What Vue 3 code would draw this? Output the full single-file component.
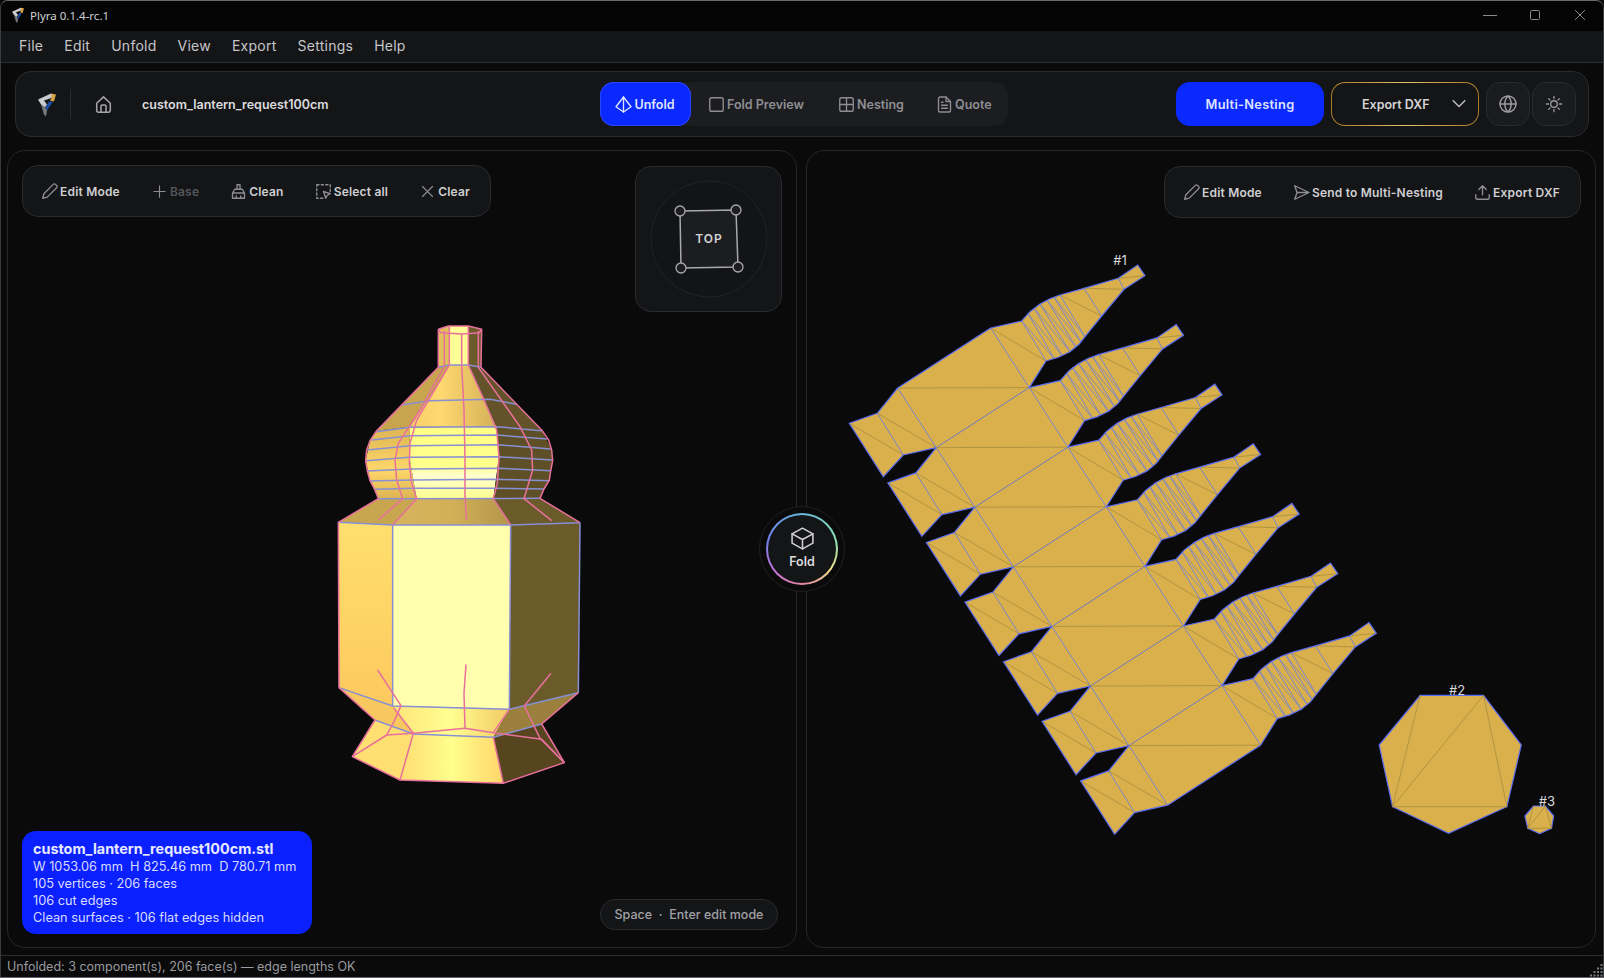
<template>
  <div class="window">
    <header class="titlebar">
      <svg class="logo-small" viewBox="0 0 20 24"><polygon points="1,7 14,1 17,3 13,6 7,8 10,12 8,15 4,12" fill="#c9cbce"/><polygon points="14,1 19,2 17,9 13,8 15,4" fill="#d9a441"/><polygon points="12,9 16,9 10,18 8,16" fill="#1d4fa8"/><polygon points="4,12 8,15 10,18 9,24 7,22" fill="#77797c"/></svg>
      <span class="app-title">Plyra 0.1.4-rc.1</span>
      <div class="win-controls">
        <svg viewBox="0 0 14 14"><line x1="0" y1="7.5" x2="14" y2="7.5"/></svg>
        <svg viewBox="0 0 14 14"><rect x="2.5" y="2.5" width="9" height="9" rx="1"/></svg>
        <svg viewBox="0 0 14 14"><path d="M2 2l10 10M12 2L2 12"/></svg>
      </div>
    </header>

    <nav class="menubar">
      <span v-for="item in menu" :key="item">{{ item }}</span>
    </nav>

    <section class="topbar">
      <div class="top-left">
        <svg class="logo" viewBox="0 0 20 24"><polygon points="1,7 14,1 17,3 13,6 7,8 10,12 8,15 4,12" fill="#c9cbce"/><polygon points="14,1 19,2 17,9 13,8 15,4" fill="#d9a441"/><polygon points="12,9 16,9 10,18 8,16" fill="#1d4fa8"/><polygon points="4,12 8,15 10,18 9,24 7,22" fill="#77797c"/></svg>
        <div class="vline"></div>
        <svg class="icon home" viewBox="2 2 20 20"><path d="M4 10.5 12 3l8 7.5V19a2 2 0 0 1-2 2H6a2 2 0 0 1-2-2z"/><path d="M9 21v-7a1.5 1.5 0 0 1 1.5-1.5h3A1.5 1.5 0 0 1 15 14v7"/></svg>
        <span class="filename">custom_lantern_request100cm</span>
      </div>

      <div class="tabs">
        <button class="tab active">
          <svg class="icon" viewBox="2 2 20 20"><path d="M12 2 22 15 12 22 2 15z"/><path d="M12 2v20"/></svg>
          Unfold
        </button>
        <button class="tab">
          <svg class="icon" viewBox="2 2 20 20"><rect x="3" y="3" width="18" height="18" rx="2.5"/></svg>
          Fold Preview
        </button>
        <button class="tab">
          <svg class="icon" viewBox="2 2 20 20"><rect x="3" y="3" width="18" height="18" rx="2.5"/><path d="M3 12h18M12 3v18"/></svg>
          Nesting
        </button>
        <button class="tab">
          <svg class="icon" viewBox="2 2 20 20"><path d="M14 2H6a2 2 0 0 0-2 2v16a2 2 0 0 0 2 2h12a2 2 0 0 0 2-2V8z"/><path d="M14 2v6h6M8 13h8M8 17h8M8 9h2"/></svg>
          Quote
        </button>
      </div>

      <div class="top-actions">
        <button class="multi">Multi-Nesting</button>
        <button class="export">
          <span>Export DXF</span>
          <svg class="icon chevron" viewBox="0 0 24 24"><path d="m5 8 7 7 7-7"/></svg>
        </button>
        <button class="round">
          <svg class="icon" viewBox="2 2 20 20"><circle cx="12" cy="12" r="10"/><path d="M2 12h20M12 2c3 3 4 6.500 4 10s-1 7-4 10c-3-3-4-6.500-4-10s1-7 4-10z"/></svg>
        </button>
        <button class="round">
          <svg class="icon" viewBox="1 1 22 22"><circle cx="12" cy="12" r="4.500"/><path d="M12 1.500v3M12 19.500v3M1.500 12h3M19.500 12h3M4.600 4.600l2.100 2.100M17.300 17.300l2.100 2.100M4.600 19.400l2.100-2.100M17.300 6.700l2.100-2.100"/></svg>
        </button>
      </div>
    </section>

    <main class="panels">
      <section class="panel">
        <svg class="canvas" viewBox="320 310 270 500">
          <defs>
            <linearGradient id="foot"><stop offset="0" stop-color="#ffdc72"/><stop offset=".5" stop-color="#ffff8c"/><stop offset="1" stop-color="#ffd56a"/></linearGradient>
            <linearGradient id="skirt"><stop offset="0" stop-color="#ffe47a"/><stop offset=".5" stop-color="#ffff90"/><stop offset="1" stop-color="#f2c864"/></linearGradient>
            <linearGradient id="dome"><stop offset="0" stop-color="#f8cf68"/><stop offset=".35" stop-color="#ffd870"/><stop offset="1" stop-color="#d4b058"/></linearGradient>
            <linearGradient id="shoulder"><stop offset="0" stop-color="#d6b35c"/><stop offset=".5" stop-color="#d2b058"/><stop offset="1" stop-color="#b4964a"/></linearGradient>
            <linearGradient id="bulb" x1="0" y1="0" x2="0" y2="1"><stop offset="0" stop-color="#ffff84"/><stop offset=".55" stop-color="#ffff8c"/><stop offset=".68" stop-color="#ffffd0"/><stop offset="1" stop-color="#ffff8c"/></linearGradient>
            <linearGradient id="bulbSide" x1="0" y1="0" x2="0" y2="1"><stop offset="0" stop-color="#dcb452"/><stop offset=".6" stop-color="#ffd66a"/><stop offset="1" stop-color="#dcb452"/></linearGradient>
            <linearGradient id="side" x1="0" y1="0" x2="0" y2="1"><stop offset="0" stop-color="#ffdf6e"/><stop offset="1" stop-color="#fdc95f"/></linearGradient>
          </defs>
          <g transform="translate(320 310) scale(.33333)">
            <polygon v-for="(f, i) in faces" :key="'f' + i" :points="f.p" :fill="f.c" />
            <polyline v-for="(l, i) in blueLines" :key="'b' + i" :points="l" class="l-blue" />
            <polyline v-for="(l, i) in pinkLines" :key="'p' + i" :points="l" class="l-pink" />
          </g>
        </svg>

        <div class="toolbar left-tools">
          <button><svg class="icon" viewBox="2 2 20 20"><path d="M3 21l1.500-6L17 2.500a2.100 2.100 0 0 1 3 0l1.500 1.500a2.100 2.100 0 0 1 0 3L9 19.500z"/></svg>Edit Mode</button>
          <button class="off"><svg class="icon" viewBox="0 0 24 24"><path d="M12 3v18M3 12h18"/></svg>Base</button>
          <button><svg class="icon" viewBox="2 2 20 20"><path d="M10 3h4v6h-4zM7 9h10l3 5H4zM4 14v7h16v-7M9 21v-3M15 21v-3"/></svg>Clean</button>
          <button><svg class="icon" viewBox="2 2 20 20"><path stroke-dasharray="3 3" d="M3 3h18v9M11 21H3V3"/><path d="m12 12 9 3-4 2-2 4z"/></svg>Select all</button>
          <button><svg class="icon" viewBox="0 0 24 24"><path d="M4 4l16 16M20 4 4 20"/></svg>Clear</button>
        </div>

        <div class="cube-box">
          <svg viewBox="0 0 147 146">
            <circle cx="74" cy="73" r="58" class="cube-ring"/>
            <polygon points="45,45 101,44 103,101 46,102" class="cube-face"/>
            <circle v-for="c in cubeCorners" :key="c[0]" :cx="c[0]" :cy="c[1]" r="5" class="cube-dot"/>
            <text x="74" y="77" text-anchor="middle" class="cube-text">TOP</text>
          </svg>
        </div>

        <div class="info">
          <strong>custom_lantern_request100cm.stl</strong>
          <span>W 1053.06 mm&nbsp; H 825.46 mm&nbsp; D 780.71 mm</span>
          <span>105 vertices · 206 faces</span>
          <span>106 cut edges</span>
          <span>Clean surfaces · 106 flat edges hidden</span>
        </div>

        <div class="hint">Space &nbsp;·&nbsp; Enter edit mode</div>
      </section>

      <section class="panel">
        <svg class="canvas" viewBox="807 151 788 796">
          <g v-for="(s, i) in strips" :key="'s' + i" :transform="`translate(${s[0]} ${s[1]})`">
            <polygon :points="stripOutline.join(' ')" class="net-fill" />
          </g>
          <g v-for="(s, i) in strips" :key="'n' + i" :transform="`translate(${s[0]} ${s[1]})`">
            <line v-for="(d, j) in stripDiagonals" :key="'d' + j" :x1="d[0]" :y1="d[1]" :x2="d[2]" :y2="d[3]" class="net-fold" />
            <line v-for="(d, j) in stripStripes" :key="'t' + j" :x1="d[0]" :y1="d[1]" :x2="d[2]" :y2="d[3]" class="net-stripe" />
            <line v-for="(d, j) in stripCuts" :key="'c' + j" :x1="d[0]" :y1="d[1]" :x2="d[2]" :y2="d[3]" class="net-cut" />
            <polyline :points="edgeFar" class="net-edge" />
            <polyline :points="edgeNear" class="net-edge" />
            <line v-if="i === 0" x1="897.7" y1="388" x2="990.7" y2="328" class="net-edge" />
            <line x1="936.25" y1="447.6" x2="1029.25" y2="387.6" :class="i === 6 ? 'net-edge' : 'net-cut'" />
          </g>
          <polygon :points="hepta" class="net-fill net-edge-solid" />
          <path d="M1420.200 695.300 1392.500 806.700M1483.500 695.300 1392.500 806.700M1483.500 695.300 1506.900 806.700M1392.500 806.700H1506.900" class="net-fold" />
          <polygon :points="tiny" class="net-fill net-edge-solid" />
          <path d="M1533.500 806 1527.800 828.300M1545.400 806 1527.800 828.300M1545.400 806 1551.500 828.300M1527.800 828.300H1551.500" class="net-fold" />
          <text x="1120" y="265" class="net-label" text-anchor="middle">#1</text>
          <text x="1457" y="695" class="net-label" text-anchor="middle">#2</text>
          <text x="1547" y="806" class="net-label" text-anchor="middle">#3</text>
        </svg>

        <div class="toolbar right-tools">
          <button><svg class="icon" viewBox="2 2 20 20"><path d="M3 21l1.500-6L17 2.500a2.100 2.100 0 0 1 3 0l1.500 1.500a2.100 2.100 0 0 1 0 3L9 19.500z"/></svg>Edit Mode</button>
          <button><svg class="icon" viewBox="2 2 20 20"><path d="M3 3l19 9-19 9 3-9zM6 12h16"/></svg>Send to Multi-Nesting</button>
          <button><svg class="icon" viewBox="2 2 20 20"><path d="M12 15V3M7 8l5-5 5 5M3 15v4a2 2 0 0 0 2 2h14a2 2 0 0 0 2-2v-4"/></svg>Export DXF</button>
        </div>
      </section>

      <div class="fold-wrap">
        <div class="fold-ring">
          <button class="fold">
            <svg class="icon" viewBox="0 0 24 24"><path d="M12 2 22 7.500v9L12 22 2 16.500v-9z"/><path d="M2 7.500 12 13l10-5.500M12 13v9"/></svg>
            Fold
          </button>
        </div>
      </div>
    </main>

    <footer class="status">
      Unfolded: 3 component(s), 206 face(s) — edge lengths OK
      <svg class="grip" viewBox="0 0 14 14">
        <rect v-for="(d, i) in gripDots" :key="i" :x="d[0]" :y="d[1]" width="2" height="2" />
      </svg>
    </footer>
  </div>
</template>

<script setup>
const menu = ["File", "Edit", "Unfold", "View", "Export", "Settings", "Help"];

const cubeCorners = [[45, 45], [101, 44], [103, 101], [46, 102]];

const gripDots = [];
for (let row = 0; row < 4; row++) {
  for (let col = 3 - row; col < 4; col++) gripDots.push([col * 3.5 + 1, row * 3.5 + 1]);
}

// lantern, in a 3x grid with origin at 320,310
const faces = [
  { p: "355,58 385,48 445,48 485,58 483,172 355,172", c: "#ffff96" },
  { p: "445,48 485,58 483,172 445,165", c: "#6b5a2a" },
  { p: "355,58 388,50 388,165 355,172", c: "#e2c05c" },
  { p: "355,172 388,165 270,350 170,362", c: "#c8a44e" },
  { p: "388,165 445,165 530,350 270,350", c: "url(#dome)" },
  { p: "445,165 483,172 665,360 530,350", c: "#64532a" },
  { p: "170,362 270,350 268,440 290,566 175,566 150,512 137,452 150,392", c: "url(#bulbSide)" },
  { p: "270,350 530,350 537,440 520,566 290,566 268,440", c: "url(#bulb)" },
  { p: "530,350 665,360 695,420 698,452 688,510 660,565 520,566 537,440", c: "#5f4f26" },
  { p: "175,566 290,566 218,645 55,637", c: "#c8a650" },
  { p: "290,566 520,566 572,645 218,645", c: "url(#shoulder)" },
  { p: "520,566 660,565 780,638 572,645", c: "#6b5a2a" },
  { p: "55,637 218,645 218,1188 57,1133", c: "url(#side)" },
  { p: "218,645 572,645 568,1198 218,1188", c: "#ffffae" },
  { p: "572,645 780,638 775,1148 568,1198", c: "#6b5a2a" },
  { p: "97,1340 165,1230 280,1272 240,1410", c: "#ffdf72" },
  { p: "280,1272 520,1282 550,1420 240,1410", c: "url(#foot)" },
  { p: "520,1282 665,1242 733,1358 550,1420", c: "#574520" },
  { p: "57,1133 218,1188 280,1272 165,1230", c: "#f8c860" },
  { p: "218,1188 568,1198 520,1282 280,1272", c: "url(#skirt)" },
  { p: "568,1198 775,1148 665,1242 520,1282", c: "#9a803c" },
];

const blueLines = [
  "355,172 388,165 445,165 483,172",
  "245,285 330,272 510,268 590,283",
  "170,365 270,352 530,350 665,362",
  "155,390 270,377 530,375 682,387",
  "142,420 270,407 532,404 692,417",
  "138,452 268,442 535,440 697,450",
  "142,483 275,477 535,475 692,482",
  "150,513 280,510 530,508 688,512",
  "165,538 285,535 525,535 672,537",
  "175,566 660,565",
  "55,637 218,645 572,645 780,638",
  "218,645 218,1188",
  "572,645 568,1198",
  "57,1133 218,1188 568,1198 775,1148",
  "165,1230 280,1272 520,1282 665,1242",
  "780,638 775,1148",
];

const pinkLines = [
  "355,172 170,362 150,392 140,420 137,452 142,483 150,512 165,540 175,566 55,637 57,1133 165,1230 97,1340 240,1410 550,1420 733,1358 665,1242 775,1148",
  "483,172 665,360 685,388 695,420 698,452 692,483 688,510 672,537 660,565 780,638",
  "355,58 385,48 445,48 485,58 483,172",
  "355,58 362,68 425,72 478,68 485,58",
  "355,58 355,172",
  "373,62 373,168 300,300 235,400 225,450 230,510 248,566 175,630",
  "388,50 388,165 290,330 270,400 268,460 275,520 290,566 218,645",
  "425,72 425,165 432,300 435,450 435,560 440,630",
  "445,48 445,165 490,265 530,360 537,440 532,520 520,566 572,645",
  "475,62 475,172 600,350 635,420 638,480 612,566 695,632",
  "173,1080 243,1187 222,1235 200,1275 97,1340",
  "200,1275 280,1270 240,1410",
  "222,1195 280,1270",
  "438,1063 432,1150 435,1255",
  "280,1270 435,1255 520,1268 665,1288 733,1358",
  "520,1268 568,1198",
  "520,1282 550,1420",
  "693,1090 613,1188 660,1285 733,1358",
];

// one strip of the net, strips repeat along a fixed offset
const stripOutline = [
  "849.3,423.3", "877.3,413.3", "897.7,388", "990.7,328", "1021.7,321",
  "1030,311.7", "1040,304", "1050,298.7", "1060,295", "1084,288.3", "1118.3,278.3",
  "1137.7,265", "1145,275.7", "1124,289.3", "1101.7,316", "1085,336.7",
  "1079.3,344", "1070,351.7", "1058.3,357.3", "1046,361", "1029.25,387.6",
  "936.25,447.6", "903.3,455", "883.3,476.7",
];
// outer edges only, the long shared edges between strips are drawn on their own
const edgeFar = stripOutline.slice(3, 21).join(" ");
const edgeNear = [...stripOutline.slice(21), ...stripOutline.slice(0, 3)].join(" ");

const strips = Array.from({ length: 7 }, (_, i) => [i * 38.55, i * 59.6]);

const top = [[1021.7, 321], [1028, 313.5], [1034, 308], [1040, 304], [1047, 300], [1054, 297], [1060, 295]];
const bottom = [[1046, 361], [1054, 358.5], [1062, 355.5], [1070, 351.7], [1076, 347], [1081, 342], [1085, 336.7]];

const stripCuts = [
  [877.3, 413.3, 903.3, 455],
  [897.7, 388, 936.25, 447.6],
  [990.7, 328, 1029.25, 387.6],
  [1084, 288.3, 1101.7, 316],
  [1118.3, 278.3, 1124, 289.3],
  ...top.map((t, i) => [t[0], t[1], bottom[i][0], bottom[i][1]]),
];

const stripStripes = top.slice(0, -1).map((t, i) => [t[0], t[1], bottom[i + 1][0], bottom[i + 1][1]]);

const stripDiagonals = [
  [849.3, 423.3, 903.3, 455],
  [877.3, 413.3, 936.25, 447.6],
  [897.7, 388, 1029.25, 387.6],
  [990.7, 328, 1046, 361],
  [1060, 295, 1101.7, 316],
  [1084, 288.3, 1124, 289.3],
  [1118.3, 278.3, 1145, 275.7],
];

const hepta = "1420.2,695.3 1483.5,695.3 1521.3,745 1506.9,806.7 1448.6,833.3 1392.5,806.7 1379.2,745";
const tiny = "1533.5,806 1545.4,806 1553.7,816 1551.5,828.3 1539.6,833.7 1527.8,828.3 1524.9,816";
</script>

<style>
html, body {
  margin: 0;
  background: #0a0a0b;
}
</style>

<style scoped>
.window {
  width: 1604px;
  height: 978px;
  display: flex;
  flex-direction: column;
  box-sizing: border-box;
  border: 1px solid #3a3b3d;
  border-top-color: #6a6a6c;
  border-bottom-color: #6a6a6c;
  border-radius: 8px 8px 0 0;
  background: #0a0a0b;
  font-family: Inter, "Noto Sans", sans-serif;
  color: #d8d8da;
  overflow: hidden;
}
button {
  font-family: inherit;
  font-size: inherit;
  font-weight: inherit;
  letter-spacing: inherit;
  border: none;
  background: none;
  color: inherit;
  padding: 0;
}
.icon {
  width: 16px;
  height: 16px;
  fill: none;
  stroke: currentColor;
  stroke-width: 1.8;
  stroke-linecap: round;
  stroke-linejoin: round;
  flex: none;
  overflow: visible;
}

.titlebar {
  height: 30px;
  flex: none;
  display: flex;
  align-items: center;
  background: #050505;
  padding-left: 10px;
  padding-bottom: 2px;
  box-sizing: border-box;
}
.logo-small {
  width: 14px;
  height: 16px;
}
.app-title {
  margin-left: 5px;
  font-family: "Noto Sans", sans-serif;
  font-size: 11.5px;
  color: #d0d0d2;
}
.win-controls {
  margin-left: auto;
  display: flex;
  gap: 31px;
  padding-right: 16px;
}
.win-controls svg {
  width: 14px;
  height: 14px;
  fill: none;
  stroke: #8a8a8c;
  stroke-width: 1;
}

.menubar {
  height: 31px;
  flex: none;
  box-sizing: content-box;
  display: flex;
  align-items: center;
  gap: 21px;
  padding-left: 18px;
  background: #141517;
  border-bottom: 1px solid #2e2f32;
  font-size: 14px;
  letter-spacing: 0.25px;
  color: #c6c6c9;
}
.menubar span {
  margin-top: -2px;
}

.topbar {
  height: 66px;
  flex: none;
  box-sizing: border-box;
  margin: 8px 14px 0;
  display: grid;
  grid-template-columns: 584px 408px 1fr;
  align-items: center;
  background: #141517;
  border: 1px solid #2a2b2e;
  border-radius: 16px;
}
.top-left {
  display: flex;
  align-items: center;
}
.logo {
  width: 20px;
  height: 25px;
  margin-left: 21px;
}
.vline {
  width: 1px;
  height: 30px;
  background: #2a2b2e;
  margin-left: 13px;
}
.home {
  width: 17px;
  height: 17px;
  margin-left: 24px;
  color: #a6a6aa;
}
.filename {
  margin-left: 30px;
  font-size: 12.5px;
  font-weight: 600;
  color: #dcdcde;
}
.tabs {
  height: 44px;
  display: flex;
  background: #1c1d20;
  border-radius: 14px;
}
.tab {
  display: flex;
  align-items: center;
  gap: 3px;
  font-size: 12.5px;
  font-weight: 600;
  color: #8e8e93;
}
.tab .icon {
  width: 15px;
  height: 15px;
}
.tab:nth-child(1) { width: 91px; justify-content: center; }
.tab:nth-child(2) { margin-left: 18px; width: 112px; }
.tab:nth-child(3) { margin-left: 18px; width: 81px; }
.tab:nth-child(4) { margin-left: 17px; }
.tab.active {
  background: #0a29ff;
  color: #dfe4ff;
  border-radius: 14px;
  box-shadow: inset 0 0 0 1px #2a45ff;
}
.top-actions {
  justify-self: end;
  margin-right: 12px;
  display: flex;
  gap: 7px;
}
.multi {
  width: 148px;
  height: 44px;
  border-radius: 14px;
  background: #0a29ff;
  color: #dfe4ff;
  font-size: 12.8px;
  font-weight: 600;
  letter-spacing: 0.3px;
}
.export {
  width: 148px;
  height: 44px;
  box-sizing: border-box;
  border: 1.5px solid transparent;
  border-radius: 14px;
  background: linear-gradient(#141517, #141517) padding-box, linear-gradient(90deg, #a87a28, #e6c266 50%, #a87a28) border-box;
  display: flex;
  align-items: center;
  font-size: 12.5px;
  font-weight: 600;
  color: #d4d4d6;
  padding-left: 30px;
}
.chevron {
  width: 20px;
  height: 20px;
  margin-left: 19px;
  color: #bcbcc0;
}
.round {
  width: 44px;
  height: 44px;
  box-sizing: border-box;
  border: 1px solid #2a2b2e;
  border-radius: 14px;
  background: #1a1b1e;
  display: flex;
  align-items: center;
  justify-content: center;
  color: #9a9a9e;
}
.round + .round {
  margin-left: -5px;
}

.panels {
  flex: 1;
  display: grid;
  grid-template-columns: 790px 790px;
  gap: 9px;
  padding: 13px 8px 7px 6px;
  min-height: 0;
  position: relative;
}
.panel {
  position: relative;
  border: 1px solid #26272a;
  border-radius: 18px;
  background: #0a0a0b;
  overflow: hidden;
}
.canvas {
  position: absolute;
  left: 0;
  top: 0;
  width: 100%;
  height: 100%;
}
.panel:first-child .canvas {
  left: 312px;
  top: 159px;
  width: 270px;
  height: 500px;
}
.l-blue, .l-pink {
  fill: none;
  vector-effect: non-scaling-stroke;
  stroke-linejoin: round;
}
.l-blue {
  stroke: #8790d4;
  stroke-width: 1.5;
}
.l-pink {
  stroke: #e8709c;
  stroke-width: 1.5;
}

.toolbar {
  position: absolute;
  top: 14px;
  height: 52px;
  box-sizing: border-box;
  display: flex;
  align-items: center;
  background: #141517;
  border: 1px solid #2a2b2e;
  border-radius: 16px;
  font-size: 12px;
  font-weight: 600;
  letter-spacing: 0.2px;
  color: #cfcfd2;
}
.toolbar button {
  display: flex;
  align-items: center;
  gap: 3px;
}
.toolbar .icon {
  width: 15px;
  height: 15px;
  color: #8e8e92;
}
.toolbar button.off {
  color: #55565a;
}
.left-tools {
  left: 14px;
  width: 469px;
  padding-left: 19px;
  gap: 32px;
}
.right-tools {
  top: 15px;
  right: 14px;
  width: 417px;
  padding-left: 19px;
  gap: 32px;
}

.cube-box {
  position: absolute;
  left: 627px;
  top: 15px;
  width: 147px;
  height: 146px;
  box-sizing: border-box;
  background: #141517;
  border: 1px solid #2a2b2e;
  border-radius: 16px;
}
.cube-box svg {
  width: 147px;
  height: 146px;
  margin: -1px;
}
.cube-ring {
  fill: #131416;
  stroke: #222326;
}
.cube-face {
  fill: #1c1d20;
  stroke: #a9a9ac;
  stroke-width: 1.5;
}
.cube-dot {
  fill: #1c1d20;
  stroke: #a9a9ac;
  stroke-width: 1.3;
}
.cube-text {
  font-size: 12px;
  font-weight: 600;
  letter-spacing: 1px;
  fill: #d4d4d6;
}

.info {
  position: absolute;
  left: 14px;
  bottom: 13px;
  width: 290px;
  height: 103px;
  box-sizing: border-box;
  padding: 9px 11px;
  background: #0a20ff;
  border-radius: 14px;
  display: flex;
  flex-direction: column;
  font-size: 12.75px;
  line-height: 17px;
  white-space: nowrap;
  color: #d8dcff;
}
.info strong {
  font-size: 14.4px;
  font-weight: 700;
  color: #e6e9ff;
  line-height: 18px;
}
.hint {
  position: absolute;
  right: 18px;
  bottom: 17px;
  height: 31px;
  width: 178px;
  box-sizing: border-box;
  display: flex;
  align-items: center;
  justify-content: center;
  background: #141517;
  border: 1px solid #2a2b2e;
  border-radius: 15px;
  font-size: 12.5px;
  font-weight: 500;
  color: #a0a0a5;
}

.net-fill {
  fill: #d9b04c;
}
.net-edge-solid {
  stroke: #5a6cf0;
  stroke-width: 1.2;
}
.net-edge {
  fill: none;
  stroke: #5a6cf0;
  stroke-width: 1.2;
}
.net-cut {
  stroke: #7080d8;
  stroke-width: 0.9;
}
.net-stripe {
  stroke: #7a84c8;
  stroke-width: 0.8;
}
.net-fold {
  stroke: #b29440;
  stroke-width: 1;
  fill: none;
}
.net-label {
  font-size: 13px;
  fill: #d8d8da;
}

.fold-wrap {
  position: absolute;
  left: 758px;
  top: 369px;
  width: 86px;
  height: 86px;
  box-sizing: border-box;
  border: 1px solid #1f2023;
  border-radius: 50%;
  background: #0a0a0b;
  display: flex;
  align-items: center;
  justify-content: center;
}
.fold-ring {
  width: 72px;
  height: 72px;
  border-radius: 50%;
  padding: 2px;
  box-sizing: border-box;
  background: conic-gradient(from 0deg, #66b8d8, #8fe0b0 80deg, #f0e08a 125deg, #e88aa0 175deg, #c070d8 235deg, #7080f0 285deg, #66b8d8);
}
.fold {
  width: 100%;
  height: 100%;
  border-radius: 50%;
  background: #141517;
  display: flex;
  flex-direction: column;
  align-items: center;
  justify-content: center;
  gap: 3px;
  padding-bottom: 4px;
  box-sizing: border-box;
  font-size: 12.5px;
  font-weight: 600;
  color: #dcdcde;
}
.fold .icon {
  width: 25px;
  height: 25px;
  color: #cfcfd2;
  stroke-width: 1.5;
}

.status {
  height: 21px;
  flex: none;
  display: flex;
  align-items: center;
  padding-left: 6px;
  border-top: 1px solid #2e2f32;
  font-size: 12.5px;
  color: #9a9a9f;
  position: relative;
}
.grip {
  position: absolute;
  right: 0;
  bottom: 0;
  width: 14px;
  height: 14px;
  fill: #77787b;
}
</style>
